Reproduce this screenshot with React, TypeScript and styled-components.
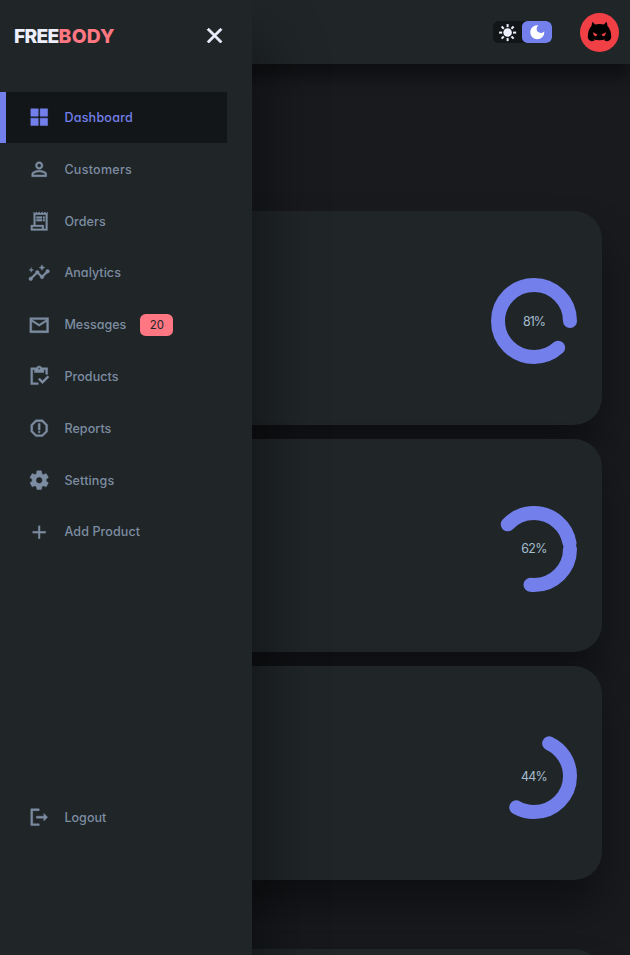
import React from "react";
import styled, { createGlobalStyle } from "styled-components";

const color = {
  background: "#181a1e",
  surface: "#202528",
  primary: "#7380ec",
  danger: "#ff7782",
  dark: "#edeffd",
  darkVariant: "#a3bdcc",
  info: "#7d8da1",
  light: "rgba(0, 0, 0, 0.4)",
};

const GlobalStyle = createGlobalStyle`
  * { margin: 0; padding: 0; box-sizing: border-box; }
  html { font-size: 14px; }
  body {
    width: 100vw;
    height: 100vh;
    overflow: hidden;
    background: ${color.background};
    color: ${color.dark};
    font-family: Inter, "Open Sans", sans-serif;
    font-feature-settings: "cv11";
    font-size: 0.88rem;
  }
`;

const Page = styled.div`
  position: relative;
  height: 955px;
  overflow: hidden;
`;

const Header = styled.header`
  position: relative;
  z-index: 1;
  display: flex;
  align-items: center;
  justify-content: flex-end;
  gap: 2rem;
  height: 64px;
  padding-right: 11px;
  background: ${color.surface};
  box-shadow: 0 1rem 1rem ${color.light};
`;

const ThemeToggle = styled.div`
  display: flex;
  width: 59px;
  height: 22px;
  border-radius: 5.6px;
  background: ${color.light};
  overflow: hidden;
`;

const ToggleSide = styled.span<{ $active?: boolean }>`
  display: flex;
  flex: none;
  width: ${(p) => (p.$active ? "30px" : "29px")};
  align-items: center;
  justify-content: center;
  border-radius: 5.6px;
  color: ${(p) => (p.$active ? "#fff" : color.dark)};
  background: ${(p) => (p.$active ? color.primary : "transparent")};
`;

const Avatar = styled.svg`
  display: block;
  width: 39px;
  height: 39px;
  border-radius: 50%;
  background: #f04046;
`;

const Main = styled.main`
  display: flex;
  flex-direction: column;
  gap: 14px;
  padding: 147px 28px 0;
`;

const Card = styled.section<{ $spaced?: boolean }>`
  display: flex;
  flex: none;
  align-items: flex-start;
  justify-content: flex-end;
  height: 213.6px;
  margin-top: ${(p) => (p.$spaced ? "55px" : "0")};
  padding: 67px 25px 0;
  border-radius: 2rem;
  background: ${color.surface};
  box-shadow: 0 2rem 3rem ${color.light};
`;

const Progress = styled.div`
  display: grid;
  place-items: center;
  width: 86px;
  height: 86px;

  & > * {
    grid-area: 1 / 1;
  }
`;

const Percent = styled.p<{ $tracking: number }>`
  padding-top: 1px;
  color: ${color.darkVariant};
  font-size: 12.4px;
  line-height: 18px;
  letter-spacing: ${(p) => p.$tracking}px;
`;

const Sidebar = styled.aside`
  position: absolute;
  inset: 0 auto 0 0;
  z-index: 2;
  display: flex;
  flex-direction: column;
  width: 252px;
  background: ${color.surface};
  box-shadow: 1rem 3rem 4rem ${color.light};
`;

const Brand = styled.div`
  display: flex;
  align-items: center;
  justify-content: space-between;
  height: 71px;
  padding: 0 24.5px 0 14px;
`;

const Logo = styled.h2`
  font-size: 19.3px;
  font-weight: 800;
  line-height: 28px;
  letter-spacing: -0.75px;
`;

const LogoAccent = styled.span`
  color: ${color.danger};
  letter-spacing: 0.25px;
`;

const Menu = styled.nav`
  display: flex;
  flex: 1;
  flex-direction: column;
  gap: 0.5px;
  padding: 21px 0 111.8px;
`;

const MenuItem = styled.a<{ $active?: boolean; $last?: boolean }>`
  display: flex;
  align-items: center;
  gap: 1rem;
  width: 227px;
  height: 51.3px;
  margin-top: ${(p) => (p.$last ? "auto" : "0")};
  padding-left: ${(p) => (p.$active ? "22px" : "28px")};
  border-left: ${(p) => (p.$active ? `6px solid ${color.primary}` : "0")};
  color: ${(p) => (p.$active ? color.primary : color.info)};
  background: ${(p) => (p.$active ? color.light : "transparent")};
`;

const Label = styled.h3<{ $tracking: number }>`
  padding-top: 0.8px;
  font-size: 12.5px;
  font-weight: 500;
  line-height: 18px;
  letter-spacing: ${(p) => p.$tracking}px;
`;

const Badge = styled.span`
  width: 33px;
  height: 22px;
  margin-left: -0.4px;
  padding-left: 1px;
  border-radius: 5.6px;
  background: ${color.danger};
  color: ${color.surface};
  font-size: 11.4px;
  line-height: 23px;
  text-align: center;
`;

const Glyph = styled.svg<{ $size: number; $weight?: number }>`
  display: block;
  flex: none;
  width: ${(p) => p.$size}px;
  height: ${(p) => p.$size}px;
  fill: currentColor;
  stroke: currentColor;
  stroke-width: ${(p) => p.$weight ?? 0};
  overflow: visible;
`;

const icons = {
  grid: "M3 3v8h8V3H3zm0 18h8v-8H3v8zM13 3v8h8V3h-8zm0 18h8v-8h-8v8z",
  person:
    "M12 5.9c1.16 0 2.1.94 2.1 2.1s-.94 2.1-2.1 2.1S9.9 9.16 9.9 8s.94-2.1 2.1-2.1m0 9c2.97 0 6.1 1.46 6.1 2.1v1.1H5.9V17c0-.64 3.13-2.1 6.1-2.1M12 4C9.79 4 8 5.79 8 8s1.79 4 4 4 4-1.79 4-4-1.79-4-4-4zm0 9c-2.67 0-8 1.34-8 4v3h16v-3c0-2.66-5.33-4-8-4z",
  receipt:
    "M19.5 3.5L18 2l-1.5 1.5L15 2l-1.5 1.5L12 2l-1.5 1.5L9 2 7.5 3.5 6 2v14H3v6h18V2l-1.5 1.5zM15 20H5v-2h10v2zm4 0h-2v-4H8V5h11v15zM9 7h6v2H9zm7 0h2v2h-2zm-7 3h6v2H9zm7 0h2v2h-2z",
  insights:
    "M21 8c-1.45 0-2.26 1.44-1.93 2.51l-3.55 3.56c-.3-.09-.74-.09-1.04 0l-2.55-2.55C12.27 10.45 11.46 9 10 9c-1.45 0-2.27 1.44-1.93 2.52l-4.56 4.55C2.44 15.74 1 16.55 1 18c0 1.1.9 2 2 2 1.45 0 2.26-1.44 1.93-2.51l4.55-4.56c.3.09.74.09 1.04 0l2.55 2.55C12.73 16.55 13.54 18 15 18c1.45 0 2.27-1.44 1.93-2.52l3.56-3.55c1.07.33 2.51-.48 2.51-1.93 0-1.1-.9-2-2-2zM15 9l.94-2.07L18 6l-2.06-.93L15 3l-.92 2.07L12 6l2.08.93zM3.5 11L4 9l2-.5L4 8l-.5-2L3 8l-2 .5L3 9z",
  mail: "M22 4H2v16h20V4zm-2 14H4V8l8 5 8-5v10zm-8-7L4 6h16l-8 5z",
  inventory:
    "M5 5h2v3h10V5h2v5h2V3h-6.18C14.4 1.84 13.3 1 12 1s-2.4.84-2.82 2H3v18h8v-2H5V5zm7-2c.55 0 1 .45 1 1s-.45 1-1 1-1-.45-1-1 .45-1 1-1zM21 11.5L15.51 17l-3.01-3-1.5 1.5 4.51 4.5L22.5 13z",
  report:
    "M15.73 3H8.27L3 8.27v7.46L8.27 21h7.46L21 15.73V8.27L15.73 3zM19 14.9L14.9 19H9.1L5 14.9V9.1L9.1 5h5.8L19 9.1v5.8zM11 7h2v7h-2zM12 15a1 1 0 1 0 0 2a1 1 0 1 0 0-2z",
  settings:
    "M19.44 12.99l-.01.02c.04-.33.08-.67.08-1.01 0-.34-.03-.66-.07-.99l.01.02 2.44-1.92-2.43-4.22-2.87 1.16.01.01c-.52-.4-1.09-.74-1.71-1h.01L14.44 2H9.57l-.44 3.07h.01c-.62.26-1.19.6-1.71 1l.01-.01-2.88-1.17-2.44 4.22 2.44 1.92.01-.02c-.04.33-.07.65-.07.99 0 .34.03.68.08 1.01l-.01-.02-2.1 1.65-.33.26 2.43 4.2 2.88-1.15-.02-.04c.53.41 1.1.75 1.73 1.01h-.03L9.58 22h4.85s.03-.18.06-.42l.38-2.65h-.01c.62-.26 1.2-.6 1.73-1.01l-.02.04 2.88 1.15 2.43-4.2s-.14-.12-.33-.26l-2.11-1.66zM12 15.5c-1.93 0-3.5-1.57-3.5-3.5s1.57-3.5 3.5-3.5 3.5 1.57 3.5 3.5-1.57 3.5-3.5 3.5z",
  add: "M19 13h-6v6h-2v-6H5v-2h6V5h2v6h6v2z",
  logout: "M5 5h7V3H3v18h9v-2H5V5zM21 12l-4-4v3H9v2h8v3l4-4z",
  close:
    "M19 6.41L17.59 5 12 10.59 6.41 5 5 6.41 10.59 12 5 17.59 6.41 19 12 13.41 17.59 19 19 17.59 13.41 12z",
  moon: "M12 3c-4.97 0-9 4.03-9 9s4.03 9 9 9 9-4.03 9-9c0-.46-.04-.92-.1-1.36-.98 1.37-2.58 2.26-4.4 2.26-2.98 0-5.4-2.42-5.4-5.4 0-1.81.89-3.42 2.26-4.4-.44-.06-.9-.1-1.36-.1z",
};

type IconName = keyof typeof icons;

const Icon = ({ name, size = 22.4, weight = 0.5 }: { name: IconName; size?: number; weight?: number }) => (
  <Glyph $size={size} $weight={weight} viewBox="0 0 24 24" aria-hidden>
    <path d={icons[name]} />
  </Glyph>
);

const SunIcon = () => (
  <Glyph $size={18.6} viewBox="0 0 24 24" aria-hidden>
    <circle cx="12.4" cy="12.4" r="5.5" />
    {[0, 45, 90, 135, 180, 225, 270, 315].map((angle) => (
      <rect key={angle} x="11.1" y="1.4" width="2.6" height="4" transform={`rotate(${angle} 12.4 12.4)`} />
    ))}
  </Glyph>
);

const menu: { icon: IconName; label: string; tracking: number; weight?: number; badge?: string }[] = [
  { icon: "grid", label: "Dashboard", tracking: 0.25 },
  { icon: "person", label: "Customers", tracking: 0.28 },
  { icon: "receipt", label: "Orders", tracking: 0.1, weight: 0.25 },
  { icon: "insights", label: "Analytics", tracking: 0.05 },
  { icon: "mail", label: "Messages", tracking: 0.02, badge: "20" },
  { icon: "inventory", label: "Products", tracking: 0.1 },
  { icon: "report", label: "Reports", tracking: 0.08 },
  { icon: "settings", label: "Settings", tracking: 0.15 },
  { icon: "add", label: "Add Product", tracking: 0.13, weight: 0.2 },
];

const rings = [
  { value: "81%", dash: 200, offset: -30, tracking: -0.9 },
  { value: "62%", dash: 80, offset: 20, tracking: -0.6 },
  { value: "44%", dash: 110, offset: 35, tracking: -0.8 },
];

export default function App() {
  return (
    <Page>
      <GlobalStyle />
      <Header>
        <ThemeToggle>
          <ToggleSide>
            <SunIcon />
          </ToggleSide>
          <ToggleSide $active>
            <Icon name="moon" size={18.6} weight={0} />
          </ToggleSide>
        </ThemeToggle>
        <Avatar viewBox="0 0 39 39" aria-label="Profile">
          <path d="M12.6 8.8L15 11.4Q19.5 10.7 24 11.4L26.4 8.8Q27.4 10.6 27.4 12.8Q31.2 17 31.2 24Q31.2 27 27.6 28.3L24.4 27.7L25.3 26.4Q19.5 28 13.7 26.4L14.6 27.7L11.4 28.3Q7.8 27 7.8 24Q7.8 17 11.6 12.8Q11.6 10.6 12.6 8.8Z" />
          <path
            fill="#f04046"
            d="M13.2 19.2L17.4 21.4Q16.9 23.3 15.3 23.2Q13.2 22.8 13.2 19.2ZM25.8 19.2L21.6 21.4Q22.1 23.3 23.7 23.2Q25.8 22.8 25.8 19.2Z"
          />
        </Avatar>
      </Header>
      <Main>
        {rings.map((ring) => (
          <Card key={ring.value}>
            <Progress>
              <svg width="86" height="86" viewBox="0 0 86 86">
                <circle
                  cx="43"
                  cy="43"
                  r="36"
                  fill="none"
                  stroke={color.primary}
                  strokeWidth="14"
                  strokeLinecap="round"
                  strokeDasharray={ring.dash}
                  strokeDashoffset={ring.offset}
                />
              </svg>
              <Percent $tracking={ring.tracking}>{ring.value}</Percent>
            </Progress>
          </Card>
        ))}
        <Card $spaced />
      </Main>
      <Sidebar>
        <Brand>
          <Logo>
            FREE<LogoAccent>BODY</LogoAccent>
          </Logo>
          <Icon name="close" size={25.2} weight={0.9} />
        </Brand>
        <Menu>
          {menu.map((item, index) => (
            <MenuItem key={item.label} $active={index === 0}>
              <Icon name={item.icon} weight={item.weight} />
              <Label $tracking={item.tracking}>{item.label}</Label>
              {item.badge && <Badge>{item.badge}</Badge>}
            </MenuItem>
          ))}
          <MenuItem $last>
            <Icon name="logout" />
            <Label $tracking={0.05}>Logout</Label>
          </MenuItem>
        </Menu>
      </Sidebar>
    </Page>
  );
}
